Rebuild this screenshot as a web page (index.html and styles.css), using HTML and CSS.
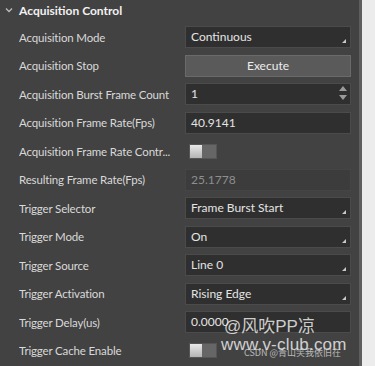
FILE: index.html
```html
<!DOCTYPE html>
<html>
<head>
<meta charset="utf-8">
<link rel="stylesheet" href="styles.css">
</head>
<body>
<div class="app">
  <div class="panel">
    <div class="group-header">
      <svg class="chev" width="8" height="6" viewBox="0 0 8 6"><path d="M1 1.5 L4 4.5 L7 1.5" fill="none" stroke="#bdbdbd" stroke-width="1.3"/></svg>
      <span>Acquisition Control</span>
    </div>
    <div class="rows">
      <div class="label">Acquisition Mode</div>
      <div class="box combo">Continuous<i class="corner"></i></div>

      <div class="label">Acquisition Stop</div>
      <div class="btn">Execute</div>

      <div class="label">Acquisition Burst Frame Count</div>
      <div class="box spin">1<span class="arrows"><i class="up"></i><i class="down"></i></span></div>

      <div class="label">Acquisition Frame Rate(Fps)</div>
      <div class="box">40.9141</div>

      <div class="label" title="Acquisition Frame Rate Control Enable">Acquisition Frame Rate Contr...</div>
      <div class="toggle-cell"><span class="toggle"><i class="knob"></i></span></div>

      <div class="label">Resulting Frame Rate(Fps)</div>
      <div class="box disabled">25.1778</div>

      <div class="label">Trigger Selector</div>
      <div class="box combo">Frame Burst Start<i class="corner"></i></div>

      <div class="label">Trigger Mode</div>
      <div class="box combo">On<i class="corner"></i></div>

      <div class="label">Trigger Source</div>
      <div class="box combo">Line 0<i class="corner"></i></div>

      <div class="label">Trigger Activation</div>
      <div class="box combo">Rising Edge<i class="corner"></i></div>

      <div class="label">Trigger Delay(us)</div>
      <div class="box">0.0000</div>

      <div class="label">Trigger Cache Enable</div>
      <div class="toggle-cell"><span class="toggle"><i class="knob"></i></span></div>
    </div>
    <div class="wm wm1">@风吹PP凉</div>
    <div class="wm wm2">www.v-club.com</div>
    <div class="wm wm3">CSDN @青山笑我依旧在</div>
  </div>
  <div class="edge"></div>
  <div class="side"></div>
</div>
</body>
</html>
```

FILE: styles.css
```css
html, body {
  margin: 0;
  padding: 0;
  background: #ececec;
}
.app {
  display: flex;
  width: 375px;
  height: 366px;
  overflow: hidden;
  font-family: Lato, "Noto Sans", "Noto Sans CJK SC", sans-serif;
}
.panel {
  position: relative;
  width: 359px;
  flex: none;
  background: #424242;
}
.edge {
  width: 3px;
  flex: none;
  background: #5e5e5e;
}
.side {
  flex: 1;
  background: #ececec;
}
.group-header {
  height: 23px;
  display: flex;
  align-items: center;
  padding-left: 5px;
  gap: 6px;
  color: #f2f2f2;
  font-weight: 700;
  font-size: 12px;
  box-sizing: border-box;
  padding-bottom: 3px;
}
.chev {
  display: block;
}
.rows {
  display: grid;
  grid-template-columns: 166px 166px;
  grid-auto-rows: 28.5px;
  align-items: center;
  padding-left: 19px;
}
.label {
  color: #d9d9d9;
  font-size: 11.5px;
  letter-spacing: -0.15px;
  white-space: nowrap;
  overflow: hidden;
  text-overflow: ellipsis;
  padding-right: 4px;
}
.box {
  position: relative;
  height: 22px;
  box-sizing: border-box;
  background: #2f2f2f;
  border: 1px solid #4b4b4b;
  color: #e4e4e4;
  font-size: 12px;
  line-height: 20px;
  padding-left: 5px;
}
.box.disabled {
  background: #3c3c3c;
  border-color: #454545;
  color: #8e8e8e;
}
.corner {
  position: absolute;
  right: 4px;
  bottom: 4px;
  width: 0;
  height: 0;
  border-left: 4px solid transparent;
  border-bottom: 4px solid #c8c8c8;
}
.arrows {
  position: absolute;
  right: 3px;
  top: 2px;
  display: flex;
  flex-direction: column;
  gap: 4px;
}
.arrows .up {
  width: 0; height: 0;
  border-left: 4px solid transparent;
  border-right: 4px solid transparent;
  border-bottom: 5px solid #9a9a9a;
}
.arrows .down {
  width: 0; height: 0;
  border-left: 4px solid transparent;
  border-right: 4px solid transparent;
  border-top: 5px solid #9a9a9a;
}
.btn {
  height: 22px;
  box-sizing: border-box;
  background: #5a5a5a;
  border: 1px solid #6a6a6a;
  color: #ededed;
  font-size: 12px;
  line-height: 20px;
  text-align: center;
}
.toggle-cell {
  display: flex;
  align-items: center;
  padding-left: 4px;
}
.toggle {
  display: flex;
  width: 28px;
  height: 15px;
  background: #666666;
  border: 1px solid #555;
  box-sizing: border-box;
}
.knob {
  display: block;
  width: 12px;
  height: 13px;
  background: linear-gradient(#e8e8e8, #b4b4b4);
}
.wm {
  position: absolute;
  color: rgba(235, 235, 235, 0.85);
  white-space: nowrap;
  font-family: "Liberation Sans", "Noto Sans CJK SC", sans-serif;
}
.wm1 {
  left: 224px;
  top: 312px;
  font-size: 17px;
}
.wm2 {
  left: 221px;
  top: 335px;
  font-size: 17px;
  letter-spacing: 0.2px;
}
.wm3 {
  left: 244px;
  top: 346px;
  font-size: 9px;
  color: rgba(225, 225, 225, 0.75);
  font-family: "Noto Sans CJK SC", sans-serif;
}
```
